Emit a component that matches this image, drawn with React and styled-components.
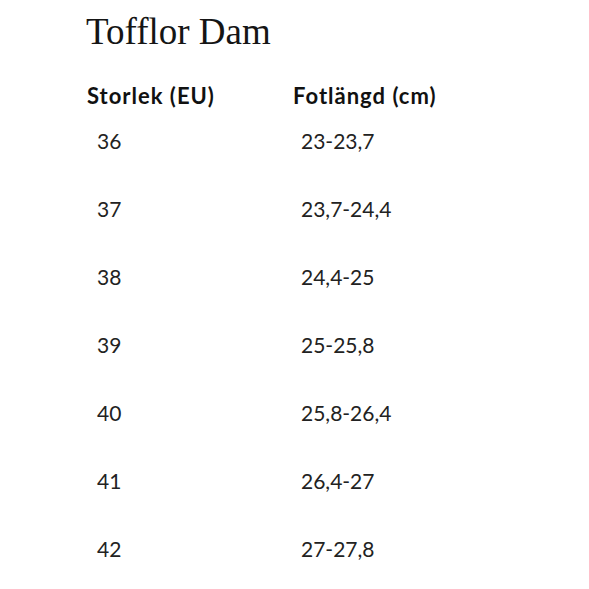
import React from 'react';
import styled, { createGlobalStyle } from 'styled-components';

const GlobalStyle = createGlobalStyle`
  body {
    margin: 0;
    background: #fff;
  }
`;

const Page = styled.div`
  padding: 12px 0 0 86px;
  color: #1f1f1f;
`;

const Title = styled.h1`
  margin: 0 0 33px;
  font-family: "Liberation Serif", "DejaVu Serif", serif;
  font-weight: 400;
  font-size: 37px;
  line-height: 40px;
  color: #151515;
`;

const Table = styled.div`
  display: grid;
  grid-template-columns: 206px 1fr;
`;

const HeadCell = styled.div`
  font-family: Lato, "Open Sans", sans-serif;
  font-weight: 700;
  font-size: 22px;
  line-height: 22px;
  letter-spacing: 1px;
  color: #111;
  padding-left: 1px;
`;

const Cell = styled.div`
  font-family: Lato, "Open Sans", sans-serif;
  font-weight: 400;
  font-size: 21px;
  line-height: 68px;
  padding-left: ${props => props.indent}px;
  color: #222;
`;

const rows = [
  ['36', '23-23,7'],
  ['37', '23,7-24,4'],
  ['38', '24,4-25'],
  ['39', '25-25,8'],
  ['40', '25,8-26,4'],
  ['41', '26,4-27'],
  ['42', '27-27,8'],
];

const App = () => {
  return (
    <Page>
      <GlobalStyle />
      <Title>Tofflor Dam</Title>
      <Table>
        <HeadCell>Storlek (EU)</HeadCell>
        <HeadCell>Fotlängd (cm)</HeadCell>
        {rows.map(([size, length]) => (
          <React.Fragment key={size}>
            <Cell indent={11}>{size}</Cell>
            <Cell indent={9}>{length}</Cell>
          </React.Fragment>
        ))}
      </Table>
    </Page>
  );
};

export default App;
